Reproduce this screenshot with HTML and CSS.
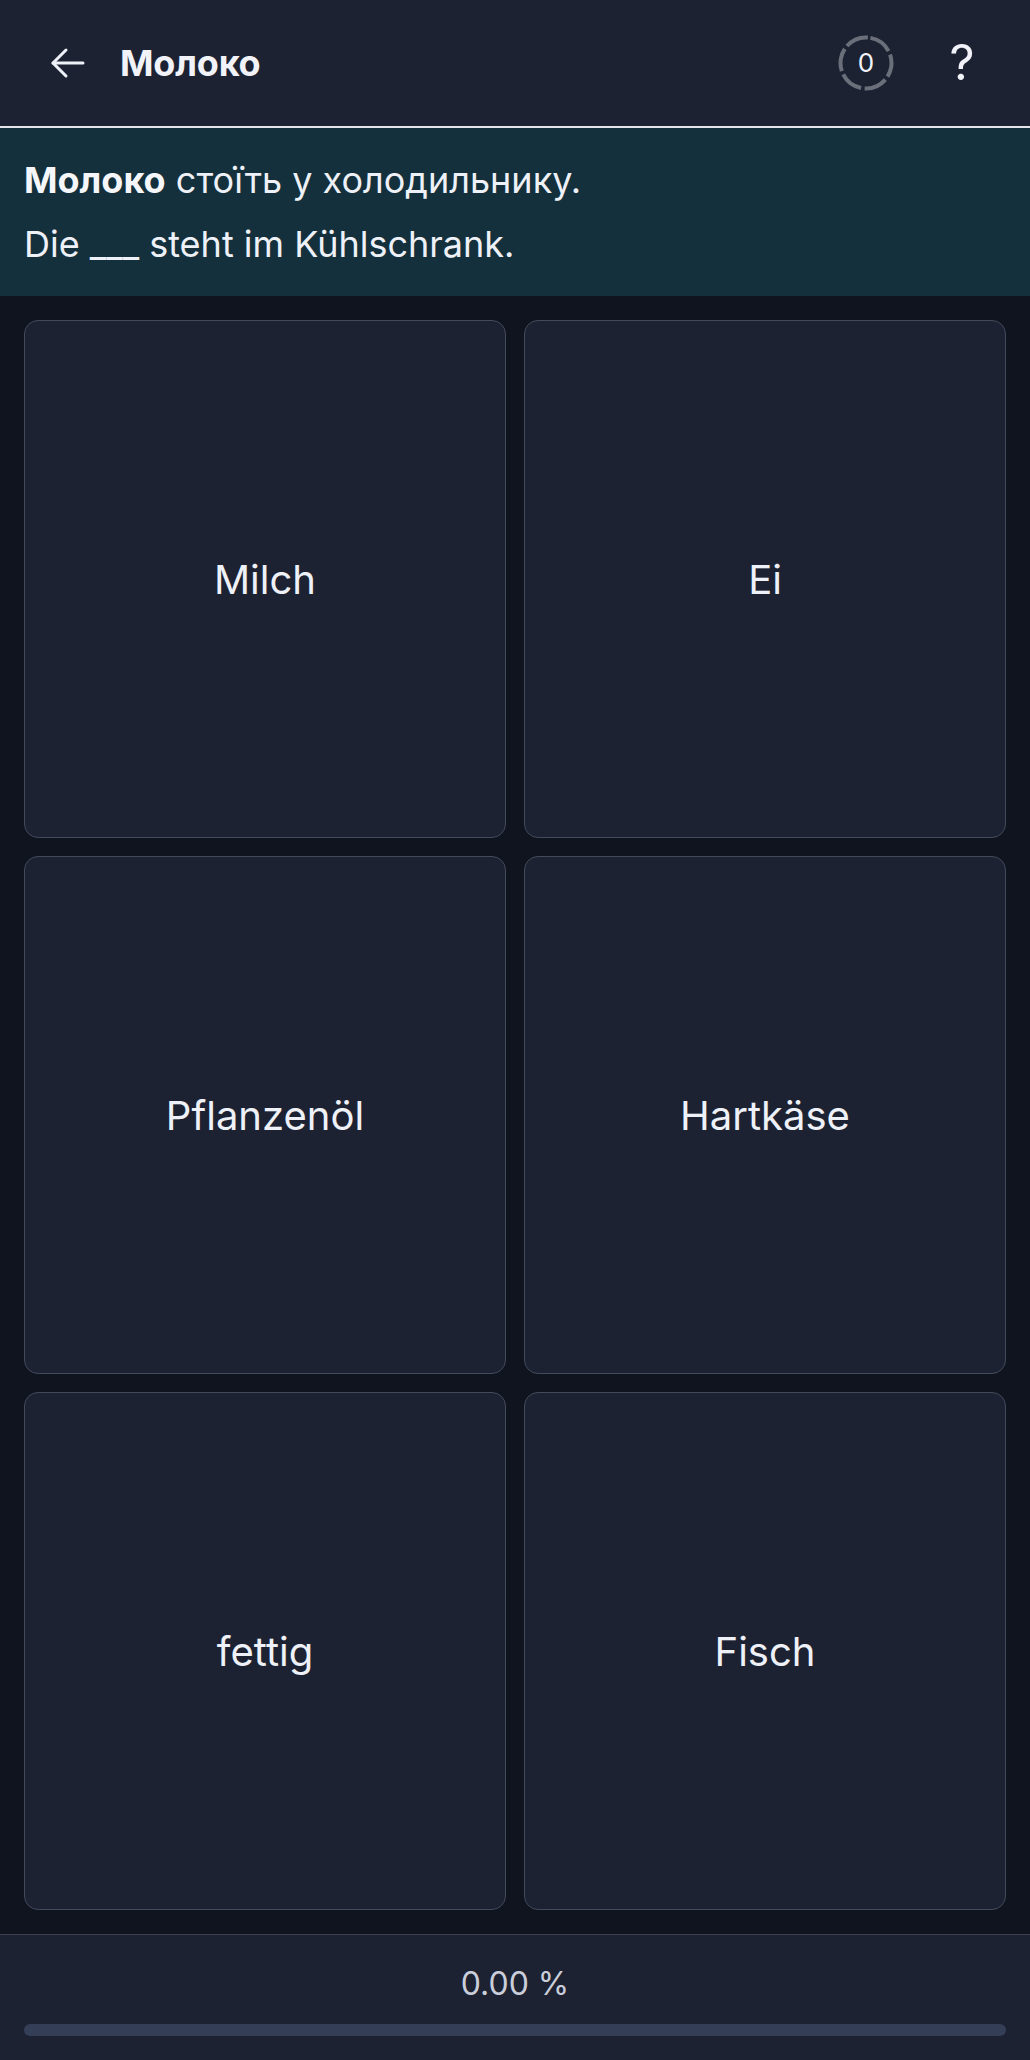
FILE: index.html
```html
<!DOCTYPE html>
<html lang="uk">
<head>
<meta charset="utf-8">
<title>Молоко</title>
<link rel="stylesheet" href="styles.css">
</head>
<body>
<div class="app">
  <header class="topbar">
    <button class="back" aria-label="Back">
      <svg width="36" height="32" viewBox="0 0 36 32" fill="none" stroke="#eef1f7" stroke-width="3" stroke-linecap="round" stroke-linejoin="round">
        <path d="M33 16H3"/>
        <path d="M16 3L3 16l13 13"/>
      </svg>
    </button>
    <h1 class="title">Молоко</h1>
    <div class="spacer"></div>
    <div class="counter">
      <svg width="56" height="56" viewBox="0 0 56 56" fill="none">
        <circle cx="28" cy="28" r="25.5" stroke="#6b6f7a" stroke-width="4" stroke-dasharray="23 3.7" transform="rotate(-80 28 28)"/>
      </svg>
      <span class="count">0</span>
    </div>
    <button class="help" aria-label="Help">?</button>
  </header>

  <section class="prompt">
    <p class="line"><strong>Молоко</strong> стоїть у холодильнику.</p>
    <p class="line">Die ___ steht im Kühlschrank.</p>
  </section>

  <main class="grid">
    <button class="card">Milch</button>
    <button class="card">Ei</button>
    <button class="card">Pflanzenöl</button>
    <button class="card">Hartkäse</button>
    <button class="card">fettig</button>
    <button class="card">Fisch</button>
  </main>

  <footer class="footer">
    <div class="percent">0.00 %</div>
    <div class="bar"><div class="fill" style="width:0%"></div></div>
  </footer>
</div>
</body>
</html>
```

FILE: styles.css
```css
* { box-sizing: border-box; }

html, body {
  margin: 0;
  padding: 0;
  height: 100%;
}

body {
  background: #10141f;
  font-family: Inter, "Noto Sans", sans-serif;
  color: #eef1f7;
}

.app {
  display: flex;
  flex-direction: column;
  height: 2060px;
}

.topbar {
  height: 128px;
  flex: none;
  display: flex;
  align-items: center;
  background: #1d2233;
  border-bottom: 2px solid #e3e5ea;
  padding: 0 44px 0 50px;
}

.back {
  background: none;
  border: 0;
  padding: 0;
  margin: 0;
  width: 36px;
  height: 32px;
  display: flex;
  align-items: center;
  justify-content: center;
  cursor: pointer;
}

.title {
  margin: 0 0 0 34px;
  font-size: 36px;
  font-weight: 700;
  color: #f1f3f9;
  letter-spacing: -0.2px;
}

.spacer { flex: 1; }

.counter {
  position: relative;
  width: 56px;
  height: 56px;
  display: flex;
  align-items: center;
  justify-content: center;
}

.counter svg {
  position: absolute;
  inset: 0;
}

.count {
  position: relative;
  font-size: 26px;
  color: #f1f3f9;
  line-height: 1;
}

.help {
  margin-left: 44px;
  background: none;
  border: 0;
  padding: 0;
  width: 48px;
  height: 56px;
  font-family: Inter, sans-serif;
  font-size: 49px;
  line-height: 56px;
  color: #f1f3f9;
  cursor: pointer;
}

.prompt {
  height: 168px;
  flex: none;
  background: #14303c;
  padding: 28px 24px 0;
  display: flex;
  flex-direction: column;
  gap: 16px;
}

.line {
  margin: 0;
  font-size: 36px;
  line-height: 48px;
  color: #eef1f7;
}

.line strong { font-weight: 700; color: #f4f6fa; }

.grid {
  flex: 1;
  display: grid;
  grid-template-columns: 1fr 1fr;
  grid-template-rows: repeat(3, 1fr);
  gap: 18px;
  padding: 24px;
}

.card {
  background: #1d2233;
  border: 1px solid #434a5a;
  border-radius: 14px;
  font-family: Inter, sans-serif;
  font-size: 40px;
  font-weight: 400;
  color: #eef1f7;
  display: flex;
  align-items: center;
  justify-content: center;
  cursor: pointer;
}

.footer {
  height: 126px;
  flex: none;
  background: #1d2233;
  border-top: 1px solid #3a4050;
  padding: 29px 24px 24px;
  display: flex;
  flex-direction: column;
  gap: 20px;
}

.percent {
  text-align: center;
  font-size: 32px;
  line-height: 40px;
  color: #c9ceda;
}

.bar {
  height: 12px;
  border-radius: 6px;
  background: #343e56;
  overflow: hidden;
}

.fill {
  height: 100%;
  background: #4f9cf0;
}
```
